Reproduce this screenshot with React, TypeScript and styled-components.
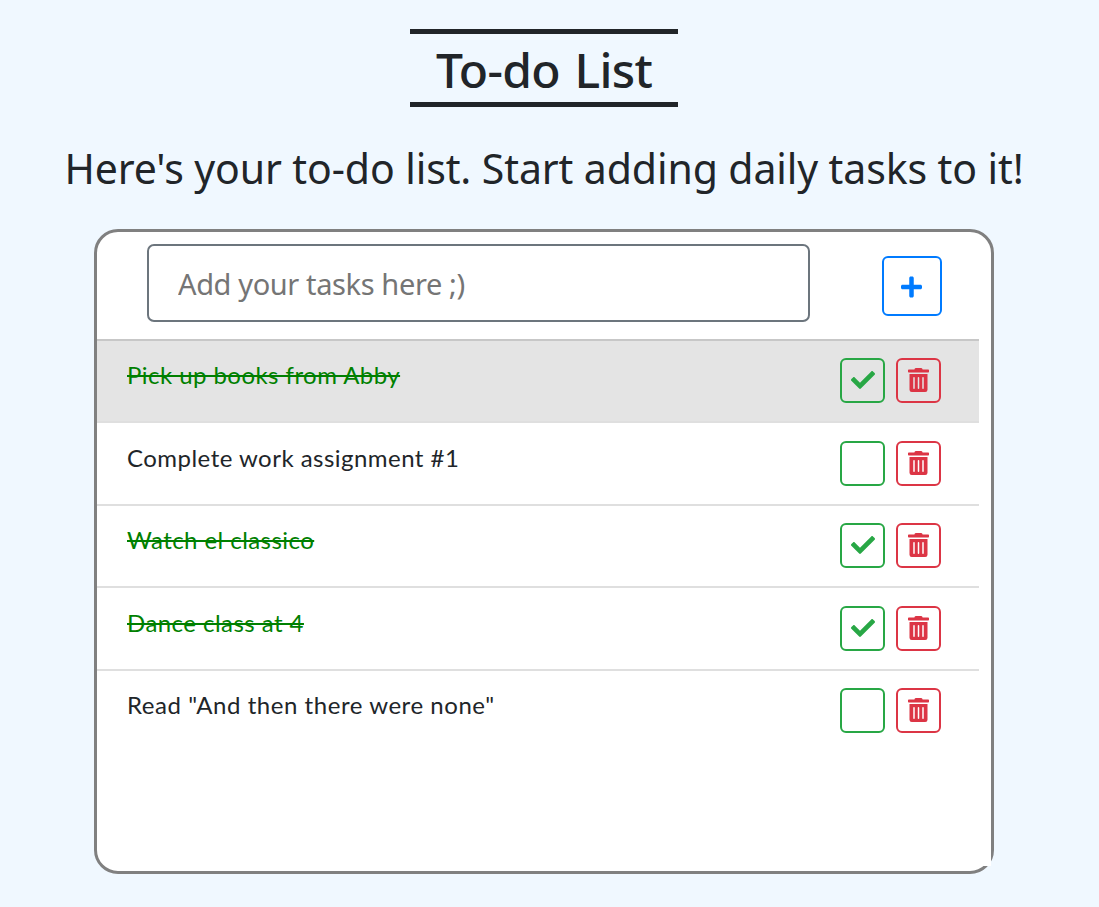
import React from "react";
import styled, { createGlobalStyle } from "styled-components";
import { FaCheck, FaPlus, FaTrashAlt } from "react-icons/fa";

const GlobalStyle = createGlobalStyle`
  * { box-sizing: border-box; }
  body { margin: 0; background: #f0f8ff; color: #212529; font-family: "Noto Sans", sans-serif; }
`;

const Page = styled.main`
  display: flex;
  flex-direction: column;
  align-items: center;
  width: 1088px;
  height: 907px;
  padding-top: 29px;
  overflow: hidden;
`;

const Title = styled.h1`
  display: flex;
  align-items: center;
  justify-content: center;
  width: 268px;
  height: 78px;
  margin: 0;
  padding: 4px 0 0;
  border: solid #212529;
  border-width: 5px 0;
  font: 500 48px/64px "Noto Sans", sans-serif;
  letter-spacing: -0.7px;
  word-spacing: 3px;
  white-space: nowrap;
`;

const Subtitle = styled.p`
  height: 60px;
  margin: 31px 0 31px;
  font: 400 41px/60px "Noto Sans", sans-serif;
  letter-spacing: -0.11px;
  white-space: nowrap;
`;

const Card = styled.section`
  display: flex;
  flex-direction: column;
  width: 900px;
  height: 645px;
  border: 3px solid #808080;
  border-radius: 24px;
  background: #fff;
`;

const AddBar = styled.form`
  display: flex;
  flex: none;
  align-items: flex-start;
  justify-content: space-between;
  height: 106.9px;
  padding: 12px 49px 0 50px;
`;

const TaskInput = styled.input`
  width: 663px;
  height: 78px;
  padding: 0 29px 0 29px;
  border: 2px solid #6c757d;
  border-radius: 7px;
  background: #fff;
  font: 400 29px "Noto Sans", sans-serif;
  letter-spacing: -0.38px;
  outline: none;
  &::placeholder { color: #757575; opacity: 1; }
`;

const IconButton = styled.button<{ $color: string; $size: number }>`
  display: flex;
  flex: none;
  align-items: center;
  justify-content: center;
  width: ${(p) => p.$size}px;
  height: ${(p) => p.$size}px;
  padding: 0;
  border: 2px solid ${(p) => p.$color};
  border-radius: 6px;
  background: transparent;
  color: ${(p) => p.$color};
`;

const AddButton = styled(IconButton)`
  margin-top: 12px;
  padding: 1px 1px 0 0;
  & svg { width: 21px; height: 24px; }
`;

const ToggleButton = styled(IconButton)`
  padding: 0 0 1px 1px;
`;

const DeleteButton = styled(IconButton)`
  padding: 0 0 1px;
  & svg { width: 21px; height: 24px; }
`;

const ListArea = styled.div`
  display: flex;
  height: 527px;
`;

const Tasks = styled.ul`
  flex: 1;
  margin: 0;
  padding: 0;
  list-style: none;
`;

const ScrollGutter = styled.div`
  width: 12px;
  background: #fff;
`;

const Task = styled.li<{ $active: boolean }>`
  display: flex;
  align-items: flex-start;
  gap: 11px;
  height: 82.5px;
  padding: 17.2px 38px 0 30px;
  border-top: 2px solid rgba(0, 0, 0, 0.125);
  background: ${(p) => (p.$active ? "#e4e4e4" : "#fff")};
`;

const TaskText = styled.span<{ $done: boolean; $spacing: number }>`
  flex: 1;
  height: 34px;
  font: 400 24px/34px Lato, "Noto Sans", sans-serif;
  letter-spacing: ${(p) => p.$spacing}px;
  white-space: nowrap;
  color: ${(p) => (p.$done ? "#008000" : "#212529")};
  text-decoration: ${(p) => (p.$done ? "line-through 2px" : "none")};
`;

const tasks = [
  { text: "Pick up books from Abby", done: true, spacing: 0.45 },
  { text: "Complete work assignment #1", done: false, spacing: 0.47 },
  { text: "Watch el classico", done: true, spacing: 0.44 },
  { text: "Dance class at 4", done: true, spacing: 0.45 },
  { text: 'Read "And then there were none"', done: false, spacing: 0.55 },
];

export default function App() {
  return (
    <>
      <GlobalStyle />
      <Page>
        <Title>To-do List</Title>
        <Subtitle>Here's your to-do list. Start adding daily tasks to it!</Subtitle>
        <Card>
          <AddBar>
            <TaskInput placeholder="Add your tasks here ;)" />
            <AddButton type="button" $color="#007bff" $size={60} aria-label="Add task">
              <FaPlus />
            </AddButton>
          </AddBar>
          <ListArea>
            <Tasks>
              {tasks.map((task, i) => (
                <Task key={task.text} $active={i === 0}>
                  <TaskText $done={task.done} $spacing={task.spacing}>{task.text}</TaskText>
                  <ToggleButton $color="#28a745" $size={45} aria-label="Toggle done">
                    {task.done && <FaCheck size={24} />}
                  </ToggleButton>
                  <DeleteButton $color="#dc3545" $size={45} aria-label="Delete task">
                    <FaTrashAlt />
                  </DeleteButton>
                </Task>
              ))}
            </Tasks>
            <ScrollGutter />
          </ListArea>
        </Card>
      </Page>
    </>
  );
}
